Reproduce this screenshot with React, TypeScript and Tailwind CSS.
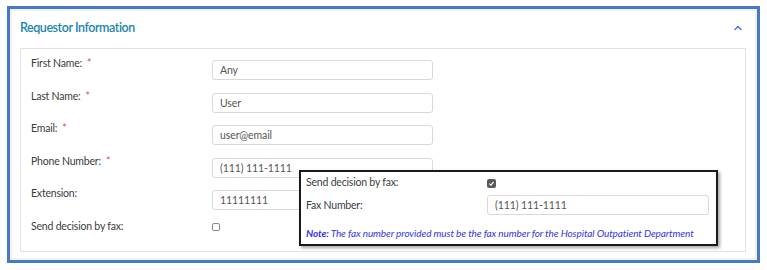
import { ChevronUp } from "lucide-react";

const rows = [
  { label: "First Name:", value: "Any", required: true },
  { label: "Last Name:", value: "User", required: true },
  { label: "Email:", value: "user@email", required: true },
  { label: "Phone Number:", value: "(111) 111-1111", required: true },
  { label: "Extension:", value: "11111111", required: false },
];

function Field({ value, w = "w-[221px]" }: { value: string; w?: string }) {
  return (
    <div
      className={`${w} h-[20px] rounded-[3px] border border-[#d9d9d9] bg-white pl-[7px] text-[10.5px] leading-[18px] tracking-[-0.1px] text-[#555]`}
    >
      {value}
    </div>
  );
}

export default function App() {
  return (
    <div className="h-[270px] w-[767px] bg-white pl-[7px] pt-[6px] font-['Lato',sans-serif] text-[#3c3c3c]">
      <div className="relative h-[257px] w-[753px] border-[3px] border-[#4a78c8]">
        <div className="h-full w-full border-2 border-[#f1f1f1]">
          {/* header */}
          <div className="flex h-[37px] items-center justify-between pb-[3px] pl-[8px] pr-[11px]">
            <h2 className="text-[12.5px] font-semibold tracking-[-0.45px] text-[#2184b3]">
              Requestor Information
            </h2>
            <ChevronUp className="h-[12px] w-[12px] text-[#3d7fe0]" strokeWidth={3} />
          </div>

          {/* form panel */}
          <div className="ml-[8px] mr-[9px] h-[204px] border border-[#e3e3e3] pl-[10px] pt-[6px] text-[10.5px] tracking-[-0.2px]">
            {rows.map((r) => (
              <div key={r.label} className="flex h-[32.5px]">
                <div className="w-[181px] leading-[16px]">
                  {r.label}
                  {r.required && <span className="ml-[5px] text-[#d9534f]">*</span>}
                </div>
                <div className="mt-[5px]">
                  <Field value={r.value} />
                </div>
              </div>
            ))}
            <div className="flex h-[32px]">
              <div className="w-[181px] leading-[16px]">Send decision by fax:</div>
              <div className="mt-[5px] h-[8px] w-[8px] rounded-[2px] border border-[#8a8a8a] bg-white" />
            </div>
          </div>
        </div>

        {/* fax popover */}
        <div className="absolute left-[289px] top-[161px] h-[76px] w-[419px] border-2 border-[#1a1a1a] bg-white pl-[5px] pt-[2px] text-[10.5px] tracking-[-0.2px] shadow-[2px_2px_3px_rgba(0,0,0,0.35)]">
          <div className="flex h-[20px]">
            <div className="w-[181px] leading-[16px]">Send decision by fax:</div>
            <div className="mt-[5px] flex h-[9px] w-[9px] items-center justify-center rounded-[2px] bg-[#5a5a5a]">
              <svg viewBox="0 0 10 10" className="h-[7px] w-[7px]">
                <path d="M2 5.2 L4.2 7.3 L8 2.8" fill="none" stroke="white" strokeWidth="1.6" />
              </svg>
            </div>
          </div>
          <div className="flex h-[30px]">
            <div className="w-[181px] pt-[3px] leading-[16px]">Fax Number:</div>
            <div className="mt-[1px]">
              <Field value="(111) 111-1111" w="w-[222px]" />
            </div>
          </div>
          <p className="whitespace-nowrap pt-[1px] text-[10px] italic leading-[16px] tracking-[-0.1px] text-[#3434e8]">
            <span className="font-bold">Note:</span> The fax number provided must be the fax number for the Hospital Outpatient Department
          </p>
        </div>
      </div>
    </div>
  );
}
